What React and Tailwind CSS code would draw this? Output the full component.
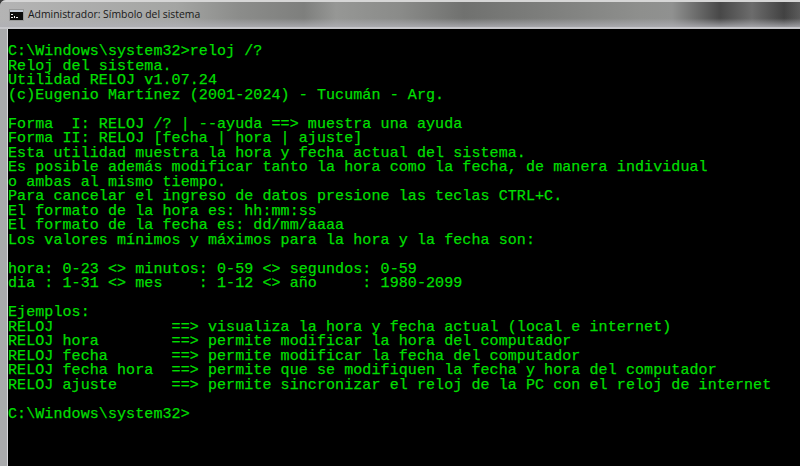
const lines = [
  'C:\\Windows\\system32>reloj /?',
  'Reloj del sistema.',
  'Utilidad RELOJ v1.07.24',
  '(c)Eugenio Martínez (2001-2024) - Tucumán - Arg.',
  '',
  'Forma  I: RELOJ /? | --ayuda ==> muestra una ayuda',
  'Forma II: RELOJ [fecha | hora | ajuste]',
  'Esta utilidad muestra la hora y fecha actual del sistema.',
  'Es posible además modificar tanto la hora como la fecha, de manera individual',
  'o ambas al mismo tiempo.',
  'Para cancelar el ingreso de datos presione las teclas CTRL+C.',
  'El formato de la hora es: hh:mm:ss',
  'El formato de la fecha es: dd/mm/aaaa',
  'Los valores mínimos y máximos para la hora y la fecha son:',
  '',
  'hora: 0-23 <> minutos: 0-59 <> segundos: 0-59',
  'dia : 1-31 <> mes    : 1-12 <> año     : 1980-2099',
  '',
  'Ejemplos:',
  'RELOJ             ==> visualiza la hora y fecha actual (local e internet)',
  'RELOJ hora        ==> permite modificar la hora del computador',
  'RELOJ fecha       ==> permite modificar la fecha del computador',
  'RELOJ fecha hora  ==> permite que se modifiquen la fecha y hora del computador',
  'RELOJ ajuste      ==> permite sincronizar el reloj de la PC con el reloj de internet',
  '',
  'C:\\Windows\\system32>',
];

function ConsoleIcon() {
  return (
    <svg width="15" height="12" viewBox="0 0 15 12" className="shrink-0">
      <rect x="0" y="0" width="15" height="12" fill="#9a9a9a" />
      <rect x="1" y="1" width="13" height="10" fill="#0c0c0c" />
      <rect x="1" y="1" width="13" height="2" fill="#c4ccd6" />
      <path d="M2 5h2v1H2zM2 8h2v1H2zM5 7h1v2H5zM7 8h2v1H7z" fill="#f0f0f0" />
    </svg>
  );
}

export default function App() {
  return (
    <div className="w-[800px] h-[466px] overflow-hidden bg-[#3a3a3a]">
      <div className="h-full flex flex-col rounded-tl-[6px] overflow-hidden bg-[#a9aaac]">
        {/* Aero title bar */}
        <div className="h-[29px] shrink-0 border-t-2 border-b-2 border-t-[#d6d6d6] border-b-[#c6c6ca] bg-[linear-gradient(180deg,#0000_0%,#0000_65%,#b0b0b6cc_100%),linear-gradient(90deg,#b4b4b4_0%,#a4a5a3_22%,#8b8c8a_30%,#7e7f7d_38%,#969795_42%,#8a8b89_50%,#70716f_58%,#7d7e7c_68%,#8e8f8d_80%,#909190_84%,#484848_90%,#6c6c6c_94%,#424242_98%,#5a5a5a_100%)] flex items-center pl-[9px] gap-[4px]">
          <ConsoleIcon />
          <span className="text-[10.4px] text-[#181818] font-['Open_Sans','Liberation_Sans',sans-serif]">
            Administrador: Símbolo del sistema
          </span>
        </div>
        <div className="flex-1 min-h-0 flex pl-[7px]">
          <div className="flex-1 border-l border-[#d8d8dc] bg-black pt-[16px] overflow-hidden">
            <pre className="font-['Liberation_Mono',monospace] text-[15px] leading-[14.52px] text-[#00df00] tracking-[0.085px] whitespace-pre [-webkit-text-stroke:0.25px_#00df00]">
              {lines.map((line, i) => (
                <div key={i} className="h-[14.52px]">{line}</div>
              ))}
            </pre>
          </div>
        </div>
      </div>
    </div>
  );
}
